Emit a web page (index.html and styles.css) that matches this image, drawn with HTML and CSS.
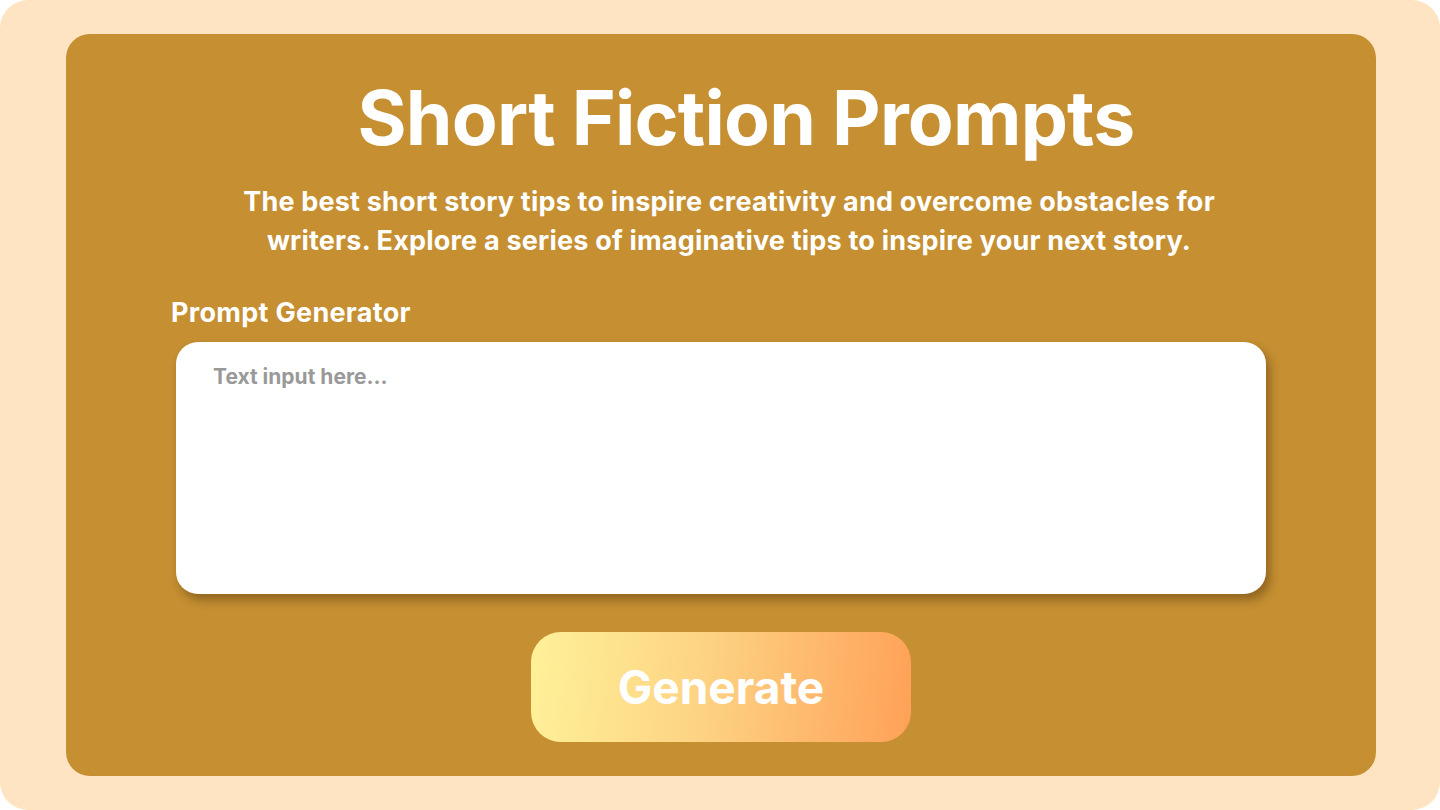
FILE: index.html
```html
<!DOCTYPE html>
<html lang="en">
<head>
<meta charset="utf-8">
<title>Short Fiction Prompts</title>
<link rel="stylesheet" href="styles.css">
</head>
<body>
<div class="frame">
  <main class="card">
    <h1 class="title">Short Fiction Prompts</h1>
    <p class="subtitle">The best short story tips to inspire creativity and overcome obstacles for writers. Explore a series of imaginative tips to inspire your next story.</p>
    <label class="label" for="prompt">Prompt Generator</label>
    <textarea id="prompt" class="input" placeholder="Text input here..."></textarea>
    <button class="btn" type="button">Generate</button>
  </main>
</div>
</body>
</html>
```

FILE: styles.css
```css
html, body {
  margin: 0;
  padding: 0;
  background: #ffffff;
}
body {
  font-family: "Inter", "Noto Sans", sans-serif;
}
.frame {
  width: 1440px;
  height: 810px;
  box-sizing: border-box;
  background: #fee4c3;
  border-radius: 28px;
  padding: 34px 64px 34px 66px;
}
.card {
  width: 1310px;
  height: 742px;
  box-sizing: border-box;
  background: #c58f32;
  border-radius: 24px;
  display: flex;
  flex-direction: column;
  align-items: center;
  padding-top: 42px;
}
.title {
  margin: 0;
  padding-left: 50px;
  color: #ffffff;
  font-size: 75px;
  font-weight: 700;
  line-height: 84px;
  letter-spacing: -0.8px;
}
.subtitle {
  margin: 22px 0 0;
  padding-left: 16px;
  width: 1010px;
  text-align: center;
  color: #ffffff;
  font-size: 27px;
  font-weight: 700;
  line-height: 39px;
  letter-spacing: 0.2px;
}
.label {
  align-self: flex-start;
  margin: 36px 0 0 105px;
  color: #ffffff;
  font-size: 27px;
  font-weight: 700;
  line-height: 34px;
  letter-spacing: 0.3px;
}
.input {
  display: block;
  margin-top: 12px;
  width: 1090px;
  height: 252px;
  box-sizing: border-box;
  border: none;
  border-radius: 22px;
  background: #ffffff;
  box-shadow: 4px 6px 10px rgba(80, 50, 10, 0.45);
  padding: 22px 37px;
  font-family: inherit;
  font-size: 21px;
  font-weight: 700;
  resize: none;
  outline: none;
  color: #333;
}
.input::placeholder {
  color: #999999;
}
.btn {
  margin-top: 38px;
  width: 380px;
  height: 110px;
  border: none;
  border-radius: 30px;
  background: linear-gradient(95deg, #fff199 0%, #fdd383 45%, #ffa158 100%);
  color: #ffffff;
  font-family: inherit;
  font-size: 46px;
  font-weight: 700;
  cursor: pointer;
}
```
